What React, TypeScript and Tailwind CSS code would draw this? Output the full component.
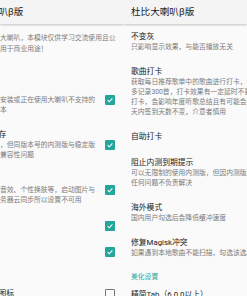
import React from 'react';

type Item = { title: string; lines: string[]; checked?: boolean; indent?: boolean };

const rightItems: Item[] = [
    { title: '不变灰', lines: ['只影响显示效果，与能否播放无关'] },
    {
        title: '歌曲打卡',
        lines: [
            '获取每日推荐歌单中的歌曲进行打卡，每日最',
            '多记录300首，打卡效果有一定延时不要重复',
            '打卡，会影响年度听歌总结且有可能会导致',
            '天内签到天数不变，介意者慎用',
        ],
    },
    { title: '自助打卡', lines: [] },
    { title: '阻止内测到期提示', lines: ['可以无限制的使用内测版，但因内测版产生的', '任何问题不负责解决'] },
    { title: '海外模式', lines: ['国内用户勾选后会降低缓冲速度'] },
    { title: '修复Magisk冲突', lines: ['如果遇到本地歌曲不能扫描，勾选该选项'] },
];

const leftItems: Item[] = [
    { title: '', lines: ['安装或正在使用大喇叭不支持的', '本'], checked: true },
    { title: '存', lines: ['，但同版本号的内测版与稳定版', '兼容性问题'], checked: true, indent: true },
    { title: '', lines: ['音效、个性换肤等，启动图片与', '务器云同步所以设置不可用'], checked: true },
    { title: '', lines: [], checked: true },
    { title: '', lines: [], checked: true },
];

const Checkbox: React.FC<{ checked?: boolean }> = ({ checked }) =>
    checked ? (
        <div className="w-[10px] h-[10px] rounded-[1px] bg-[#26a69a] flex items-center justify-center flex-shrink-0">
            <svg viewBox="0 0 10 10" className="w-[8px] h-[8px]">
                <path d="M2 5.2 L4.1 7.2 L8 3" fill="none" stroke="white" strokeWidth="1.3" />
            </svg>
        </div>
    ) : (
        <div className="w-[10px] h-[10px] rounded-[1px] border-[1.3px] border-[#757575] flex-shrink-0" />
    );

const Row: React.FC<{ item: Item; withBox?: boolean }> = ({ item, withBox }) => (
    <div className="flex items-center min-h-[26px] py-[7.5px]">
        <div className="flex-1 min-w-0 overflow-hidden">
            <div className={`text-[7.8px] leading-[10px] text-[#212121] whitespace-nowrap ${item.indent ? '-ml-[1.5px]' : ''}`}>
                {item.title || '\u00a0'}
            </div>
            {item.lines.map((l) => (
                <div key={l} className="text-[6.8px] leading-[10px] text-[#7a7a7a] whitespace-nowrap">
                    {l}
                </div>
            ))}
        </div>
        {withBox && (
            <div className="w-[10px] mr-[9px] ml-[4px]">
                <Checkbox checked={item.checked} />
            </div>
        )}
    </div>
);

const Header: React.FC<{ text: string; className?: string }> = ({ text, className }) => (
    <div className="h-[24px] bg-[#f4f4f4] shadow-[0_1px_2px_rgba(0,0,0,0.22)] flex items-center relative z-10">
        <span className={`text-[9.6px] text-[#212121] whitespace-nowrap ${className ?? ''}`}>{text}</span>
    </div>
);

export default function App() {
    return (
        <div className="flex w-[247px] h-[296px] overflow-hidden bg-[#fafafa] font-['Roboto','Noto_Sans_CJK_SC',sans-serif]">
            {/* left page, right half visible */}
            <div className="w-[124px] flex-shrink-0 overflow-hidden">
                <Header text="叭β版" className="-ml-[1.5px]" />
                <div className="h-[53.5px] pt-[8.8px]">
                    <div className="text-[6.8px] leading-[11px] text-[#7a7a7a] whitespace-nowrap">大喇叭，本模块仅供学习交流使用且公</div>
                    <div className="text-[6.8px] leading-[11px] text-[#7a7a7a] whitespace-nowrap">用于商业用途！</div>
                </div>
                {leftItems.map((it, i) => (
                    <Row key={i} item={it} withBox />
                ))}
                <div className="h-[16.5px]" />
                <Row item={{ title: '图标', lines: [], checked: false, indent: true }} withBox />
            </div>

            {/* right page, left half visible */}
            <div className="flex-1 overflow-hidden">
                <Header text="杜比大喇叭β版" className="pl-[7px]" />
                <div className="pl-[7px]">
                    {rightItems.map((it) => (
                        <Row key={it.title} item={it} />
                    ))}
                    <div className="pt-[6.5px] text-[6.8px] leading-[10px] text-[#26a69a] whitespace-nowrap">美化设置</div>
                    <Row item={{ title: '精简Tab（6.0.0以上）', lines: [] }} />
                </div>
            </div>
        </div>
    );
}
